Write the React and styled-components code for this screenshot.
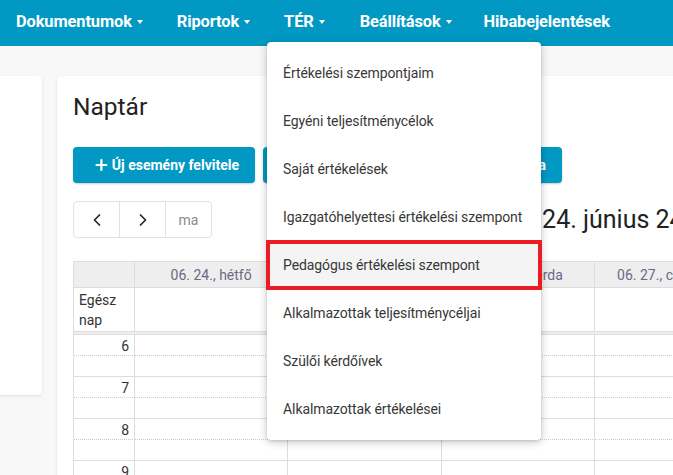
import React from "react";
import styled, { createGlobalStyle } from "styled-components";
import { Plus, ChevronLeft, ChevronRight } from "lucide-react";

const GlobalStyle = createGlobalStyle`
  html, body {
    margin: 0;
    padding: 0;
    height: 475px;
    overflow: hidden;
    background: #f8f8f8;
    font-family: Roboto, "Liberation Sans", Arial, sans-serif;
  }
`;

const navItems = [
  { label: "Dokumentumok", caret: true },
  { label: "Riportok", caret: true },
  { label: "TÉR", caret: true, open: true },
  { label: "Beállítások", caret: true },
  { label: "Hibabejelentések" }
];

const menuItems = [
  "Értékelési szempontjaim",
  "Egyéni teljesítménycélok",
  "Saját értékelések",
  "Igazgatóhelyettesi értékelési szempont",
  "Pedagógus értékelési szempont",
  "Alkalmazottak teljesítménycéljai",
  "Szülői kérdőívek",
  "Alkalmazottak értékelései"
];

const days = [
  "06. 24., hétfő",
  "06. 25., kedd",
  "06. 26., szerda",
  "06. 27., csütörtök",
  "06. 28., péntek",
  "06. 29., szombat",
  "06. 30., vasárnap"
];

const hours = [6, 7, 8, 9, 10, 11, 12];

const NavBar = styled.nav`
  height: 46px;
  background: #0199c3;
  display: flex;
  align-items: stretch;
  position: relative;
  z-index: 5;
`;

const NavItem = styled.div`
  position: relative;
  display: flex;
  align-items: center;
  padding: 0 17px 4px 17px;
  color: #fff;
  font-weight: 700;
  font-size: 16.4px;
  letter-spacing: -0.1px;
  white-space: nowrap;

  &:first-child {
    padding-left: 16px;
  }
  &:nth-child(4) {
    padding-left: 18px;
    padding-right: 15px;
  }
`;

const Caret = styled.span`
  display: inline-block;
  margin-left: 5px;
  margin-top: 2px;
  width: 0;
  height: 0;
  border-left: 3.5px solid transparent;
  border-right: 3.5px solid transparent;
  border-top: 4px solid #fff;
`;

const Dropdown = styled.div`
  position: absolute;
  top: 42px;
  left: 0;
  width: 274px;
  padding: 7px 0;
  background: #fff;
  border-radius: 4px;
  box-shadow: 0 2px 10px rgba(0, 0, 0, 0.22), 0 1px 3px rgba(0, 0, 0, 0.12);
`;

const MenuItem = styled.div`
  height: 48px;
  display: flex;
  align-items: center;
  padding: 0 16px;
  font-size: 14px;
  font-weight: 400;
  color: #383838;
  background: ${(p) => (p.$active ? "#f4f4f4" : "transparent")};
  outline: ${(p) => (p.$active ? "4px solid #ec1c24" : "none")};
  outline-offset: -3px;
  position: relative;
`;

const Main = styled.main`
  display: flex;
  gap: 15px;
  padding-top: 30px;
`;

const SideCard = styled.div`
  width: 50px;
  height: 319px;
  margin-left: -8px;
  background: #fff;
  border-radius: 4px;
  box-shadow: 0 1px 3px rgba(0, 0, 0, 0.1);
  flex-shrink: 0;
`;

const CalendarCard = styled.section`
  flex-shrink: 0;
  width: 1300px;
  background: #fff;
  border-radius: 5px;
  box-shadow: 0 1px 3px rgba(0, 0, 0, 0.1);
  padding: 16px;
`;

const Title = styled.h1`
  margin: 0;
  font-size: 24.5px;
  line-height: 30px;
  font-weight: 400;
  color: #222;
`;

const ButtonRow = styled.div`
  display: flex;
  gap: 8px;
  margin-top: 25px;
`;

const PrimaryButton = styled.button`
  height: 36px;
  width: ${(p) => p.$width}px;
  display: flex;
  align-items: center;
  justify-content: ${(p) => (p.$end ? "flex-end" : "flex-start")};
  gap: 2px;
  padding: 0 16px 0 20px;
  border: none;
  border-radius: 4px;
  background: #0199c3;
  color: #fff;
  font-family: inherit;
  font-weight: 700;
  font-size: 14px;
  box-shadow: 0 1px 2px rgba(0, 0, 0, 0.2);
  white-space: nowrap;
`;

const Toolbar = styled.div`
  display: flex;
  align-items: center;
  margin-top: 18px;
`;

const BtnGroup = styled.div`
  display: flex;
  border: 1px solid #e2e2e2;
  border-radius: 4px;
  height: 35px;
`;

const GroupBtn = styled.div`
  width: 45px;
  display: flex;
  align-items: center;
  justify-content: center;
  border-left: ${(p) => (p.$first ? "none" : "1px solid #e2e2e2")};
  color: ${(p) => (p.$muted ? "#8a8a8a" : "#222")};
  font-size: 14px;
`;

const RangeTitle = styled.h2`
  margin: 0 0 0 302px;
  font-size: 25px;
  font-weight: 400;
  color: #222;
  white-space: nowrap;
`;

const Grid = styled.div`
  margin-top: 23px;
  display: grid;
  grid-template-columns: 61px repeat(7, 153.3px);
  border-left: 1px solid #ddd;
  border-top: 1px solid #ddd;
  font-size: 14px;
`;

const HeadCell = styled.div`
  height: 25px;
  background: #eee;
  border-right: 1px solid #ddd;
  border-bottom: 1px solid #ddd;
  display: flex;
  align-items: center;
  justify-content: center;
  color: #6c6886;
  white-space: nowrap;
`;

const AllDayCell = styled.div`
  height: 44px;
  border-right: 1px solid #ddd;
  border-bottom: 1px solid #ddd;
  padding: 2px 5px;
  box-sizing: border-box;
  line-height: 20px;
  color: #333;
`;

const Divider = styled.div`
  grid-column: 1 / -1;
  height: 2px;
  background: #eee;
  border-bottom: 1px solid #ddd;
`;

const SlotCell = styled.div`
  height: 21px;
  box-sizing: border-box;
  border-right: 1px solid #ddd;
  border-bottom: ${(p) => (p.$half ? "1px dotted #ccc" : "1px solid #ddd")};
  padding: 1px 5px 0;
  text-align: right;
  line-height: 20px;
  color: #333;
`;

function NavMenu() {
  return (
    <NavBar>
      {navItems.map((item) => (
        <NavItem key={item.label}>
          {item.label}
          {item.caret && <Caret />}
          {item.open && (
            <Dropdown>
              {menuItems.map((m) => (
                <MenuItem key={m} $active={m === "Pedagógus értékelési szempont"}>
                  {m}
                </MenuItem>
              ))}
            </Dropdown>
          )}
        </NavItem>
      ))}
    </NavBar>
  );
}

function Calendar() {
  return (
    <Grid>
      <HeadCell />
      {days.map((d) => (
        <HeadCell key={d}>{d}</HeadCell>
      ))}
      <AllDayCell>Egész nap</AllDayCell>
      {days.map((d) => (
        <AllDayCell key={d} />
      ))}
      <Divider />
      {hours.map((h) => (
        <React.Fragment key={h}>
          <SlotCell $half>{h}</SlotCell>
          {days.map((d) => (
            <SlotCell key={d} $half />
          ))}
          <SlotCell />
          {days.map((d) => (
            <SlotCell key={d} />
          ))}
        </React.Fragment>
      ))}
    </Grid>
  );
}

export default function App() {
  return (
    <>
      <GlobalStyle />
      <NavMenu />
      <Main>
        <SideCard />
        <CalendarCard>
          <Title>Naptár</Title>
          <ButtonRow>
            <PrimaryButton $width={182}>
              <Plus size={18} strokeWidth={3.2} />
              Új esemény felvitele
            </PrimaryButton>
            <PrimaryButton $width={299} $end>
              Események importálása
            </PrimaryButton>
          </ButtonRow>
          <Toolbar>
            <BtnGroup>
              <GroupBtn $first>
                <ChevronLeft size={20} strokeWidth={2} />
              </GroupBtn>
              <GroupBtn>
                <ChevronRight size={20} strokeWidth={2} />
              </GroupBtn>
              <GroupBtn $muted>ma</GroupBtn>
            </BtnGroup>
            <RangeTitle>2024. június 24 – 30.</RangeTitle>
          </Toolbar>
          <Calendar />
        </CalendarCard>
      </Main>
    </>
  );
}
